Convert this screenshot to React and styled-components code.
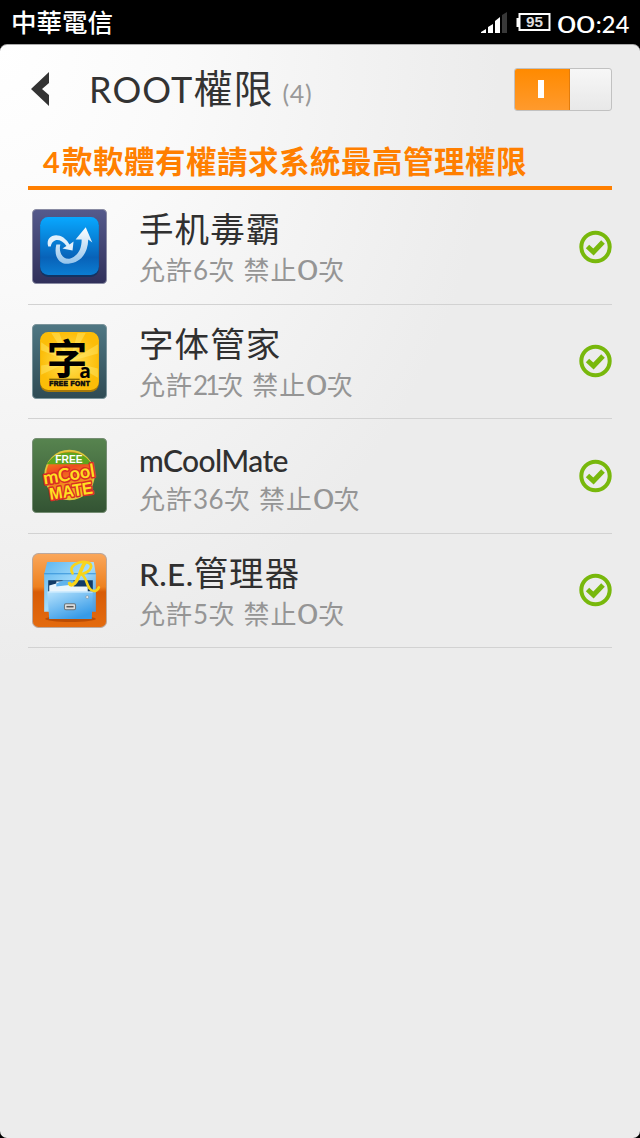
import React from "react";
import styled, { createGlobalStyle } from "styled-components";

const apps = [
	{ id: "duba", name: [["手机毒霸", "cjk"]], allowed: "6", icon: DubaIcon },
	{ id: "font", name: [["字体管家", "cjk"]], allowed: "21", tight: true, icon: FontIcon },
	{ id: "cool", name: [["mCoolMate", "latin"]], allowed: "36", icon: CoolIcon },
	{
		id: "re",
		name: [
			["R.E.", "latin"],
			["管理器", "cjk"],
		],
		allowed: "5",
		icon: ExplorerIcon,
	},
];

function DubaIcon() {
	return (
		<AppIcon viewBox="0 0 74 74">
			<defs>
				<linearGradient id="dubaFrame" x2="0" y2="1">
					<stop offset="0" stopColor="#555a8c" />
					<stop offset="1" stopColor="#30305a" />
				</linearGradient>
				<linearGradient id="dubaFace" x2="0" y2="1">
					<stop offset="0" stopColor="#08a8ff" />
					<stop offset="0.7" stopColor="#0862b8" />
					<stop offset="1" stopColor="#0b7dd2" />
				</linearGradient>
				<linearGradient id="dubaMark" x2="0" y2="1">
					<stop offset="0" stopColor="#fff" />
					<stop offset="1" stopColor="#94c4ec" />
				</linearGradient>
			</defs>
			<rect x=".5" y=".5" width="73" height="73" rx="4" fill="url(#dubaFrame)" stroke="#898ba3" />
			<rect x="8" y="9" width="58" height="58" rx="8" fill="#123363" />
			<rect x="8" y="8" width="58" height="57" rx="8" fill="url(#dubaFace)" />
			<path
				d="M16 37C13 27 23 23 31 28Q35 31 37 35L41 32L40 41L30 39L34 36.5C28 28 20 29 18.5 37Z"
				fill="#e1f0fc"
			/>
			<path
				d="M24 35C21 47 27 55 36 54C47 53 55 45 55.5 30L59.5 33L53 18L43 30L49 30C49 41 44 47 37 49C30 50 26 42 28 35Z"
				fill="url(#dubaMark)"
			/>
		</AppIcon>
	);
}

function FontIcon() {
	return (
		<AppIcon viewBox="0 0 74 74">
			<defs>
				<linearGradient id="fontFrame" x2="0" y2="1">
					<stop offset="0" stopColor="#4f7783" />
					<stop offset="1" stopColor="#2f4b54" />
				</linearGradient>
				<radialGradient id="fontFace">
					<stop offset="0" stopColor="#ffe45b" />
					<stop offset="1" stopColor="#fcbd08" />
				</radialGradient>
			</defs>
			<rect x=".5" y=".5" width="73" height="73" rx="4" fill="url(#fontFrame)" stroke="#7b949b" />
			<rect x="8" y="9" width="58" height="58" rx="8" fill="#a87a08" />
			<rect x="8" y="8" width="58" height="57" rx="8" fill="url(#fontFace)" />
			<path
				d="M37 37L9 18V26ZM37 37L19 9H27ZM37 37L45 9H53ZM37 37L65 20V29ZM37 37L65 44V53ZM37 37L9 41V50Z"
				fill="#fff07c"
				opacity=".4"
			/>
			<IconText x="14.5" y="49" $size={40}>
				字
			</IconText>
			<IconText x="46.5" y="53" $size={19} $family="Open Sans">
				a
			</IconText>
			<rect x="17" y="54" width="30" height="1" fill="#514000" />
			<IconText x="17" y="61.5" $size={6.5} textLength="40" stroke="#111" strokeWidth=".6">
				FREE FONT
			</IconText>
		</AppIcon>
	);
}

function CoolIcon() {
	return (
		<AppIcon viewBox="0 0 74 74">
			<defs>
				<linearGradient id="coolFrame" x2="0" y2="1">
					<stop offset="0" stopColor="#57844f" />
					<stop offset="1" stopColor="#335333" />
				</linearGradient>
				<linearGradient id="coolBall" x2="0.3" y2="1">
					<stop offset="0" stopColor="#f9b514" />
					<stop offset="0.45" stopColor="#ef4b20" />
					<stop offset="1" stopColor="#f4c61c" />
				</linearGradient>
			</defs>
			<rect x=".5" y=".5" width="73" height="73" rx="4" fill="url(#coolFrame)" stroke="#758d73" />
			<circle cx="37" cy="36.5" r="24" fill="url(#coolBall)" stroke="#dfc73d" strokeWidth="1.8" />
			<path d="M14.5 26Q22 14 37 14Q52 14 59 26Z" fill="#5fa51e" />
			<IconText x="23" y="25" $size={11} fill="#fff" textLength="27" lengthAdjust="spacingAndGlyphs">
				FREE
			</IconText>
			<g transform="rotate(-9 37 40)" strokeLinejoin="round">
				<IconText
					x="11.5"
					y="42"
					$size={18}
					$family="Lato"
					fill="#ffdf21"
					stroke="#d92e25"
					strokeWidth="3"
					paintOrder="stroke"
					textLength="51"
					lengthAdjust="spacingAndGlyphs"
				>
					mCool
				</IconText>
				<IconText
					x="15"
					y="58"
					$size={17}
					fill="#ffdf21"
					stroke="#d92e25"
					strokeWidth="3"
					paintOrder="stroke"
					textLength="43"
					lengthAdjust="spacingAndGlyphs"
				>
					MATE
				</IconText>
			</g>
		</AppIcon>
	);
}

function ExplorerIcon() {
	return (
		<AppIcon viewBox="0 0 74 74">
			<defs>
				<linearGradient id="reFrame" x2="0" y2="1">
					<stop offset="0" stopColor="#faa75b" />
					<stop offset="0.45" stopColor="#ee811f" />
					<stop offset="0.52" stopColor="#d85c07" />
					<stop offset="1" stopColor="#e46b0e" />
				</linearGradient>
				<linearGradient id="reBox" x2="1" y2="1">
					<stop offset="0" stopColor="#5eb6ef" />
					<stop offset="0.5" stopColor="#a4dcfb" />
					<stop offset="1" stopColor="#4397dc" />
				</linearGradient>
				<linearGradient id="reDrawer" x2="0.6" y2="1">
					<stop offset="0" stopColor="#b9e4fd" />
					<stop offset="1" stopColor="#379be8" />
				</linearGradient>
			</defs>
			<rect x=".5" y=".5" width="73" height="73" rx="6" fill="url(#reFrame)" stroke="#bca89c" />
			<ellipse cx="38" cy="65" rx="25" ry="3" fill="#a63f00" opacity=".65" />
			<path d="M15 9H61L63 21V58H12V21Z" fill="url(#reBox)" />
			<path d="M12 20.5H63" stroke="#3793d9" />
			<path d="M16 27H60V39H16Z" fill="#123b66" />
			<path d="M17 32L24 30V28H41V33H55V40H17Z" fill="#e9f5fc" />
			<path d="M24 30L31 27H41V31L24 33Z" fill="#61b4ed" />
			<path d="M15 38H60L59 65H17Z" fill="url(#reDrawer)" />
			<path d="M16 38.5H60" stroke="#d7efff" />
			<rect x="32" y="50" width="11" height="6" rx="1.5" fill="#dcdcdc" stroke="#68747b" />
			<path d="M34 53H41" stroke="#575757" strokeWidth="1.5" />
			<circle cx="54.5" cy="43.5" r="1.5" fill="#e2e8eb" stroke="#76909f" strokeWidth=".6" />
			{/* swash initial over the cabinet */}
			<path
				d="M40 20C35 12 47 8 53 9C62 10 59 19 48 21C55 22 53 37 61 37.5Q64 38 66 34"
				fill="none"
				stroke="#f8d51b"
				strokeWidth="2.6"
				strokeLinecap="round"
			/>
			<path
				d="M52 10C48 15 46 27 42 30Q38 33 37 30"
				fill="none"
				stroke="#f8d51b"
				strokeWidth="3.4"
				strokeLinecap="round"
			/>
		</AppIcon>
	);
}

function StatusIcons() {
	return (
		<svg width="70" height="24" viewBox="0 0 70 24">
			<path d="M0 21V20L5 17V21ZM7 21V15L12 12V21ZM14 21V9L19 5V21Z" fill="#fff" />
			<path d="M21 21V3L26 0V21Z" fill="#383838" />
			<rect x="38.5" y="2" width="30" height="16" fill="none" stroke="#fff" strokeWidth="2" />
			<path d="M35.5 6H38.5V15H35.5Z" fill="#fff" />
			<BatteryText x="45" y="15" textLength="17" lengthAdjust="spacingAndGlyphs">
				95
			</BatteryText>
		</svg>
	);
}

function AppRow({ app }) {
	const Icon = app.icon;
	return (
		<Row>
			<Icon />
			<Info>
				<Name>
					{app.name.map(([text, kind]) =>
						kind === "cjk" ? (
							<Cjk key={text} $size={34.5} $gap={1.1}>
								{text}
							</Cjk>
						) : (
							<Latin
								key={text}
								$size={text.length > 4 ? 30 : 31.5}
								$gap={text.length > 4 ? -0.6 : 0.4}
								$drop={text.length > 4 ? 4 : 0}
								$weight={500}
							>
								{text}
							</Latin>
						)
					)}
				</Name>
				<Detail>
					<Cjk $size={26} $gap={1}>允許</Cjk>
					<Latin $size={26} $gap={app.tight ? -3 : 0.4}>{app.allowed}</Latin>
					<Cjk $size={26} $gap={1}>次</Cjk>
					<Space />
					<Cjk $size={26} $gap={1}>禁止</Cjk>
					<Zero>0</Zero>
					<Cjk $size={26}>次</Cjk>
				</Detail>
			</Info>
			<svg width="34" height="34" viewBox="0 0 34 34">
				<circle cx="17.5" cy="17" r="14.2" fill="none" stroke="#78b80c" strokeWidth="4" />
				<path d="M9.5 16.5L15.5 22L25 12" fill="none" stroke="#78b80c" strokeWidth="5" />
			</svg>
		</Row>
	);
}

export default function App() {
	return (
		<Screen>
			<GlobalStyle />
			<StatusBar>
				<Cjk $size={25.5} $weight={500} $drop={-1.5}>中華電信</Cjk>
				<StatusRight>
					<StatusIcons />
					<Clock>
						<Zero>0</Zero>
						<Zero>0</Zero>
						<span>:24</span>
					</Clock>
				</StatusRight>
			</StatusBar>
			<Page>
				<Header>
					<svg width="18" height="34" viewBox="0 0 18 34">
						<path d="M18 0V11L11 17L18 23V34L0 17Z" fill="#333" />
					</svg>
					<Title>
						<Latin $size={36} $gap={1.1}>ROOT</Latin>
						<Cjk $size={39} $gap={1}>權限</Cjk>
						<Count>(4)</Count>
					</Title>
					<Toggle>
						<ToggleOn>
							<Bar />
						</ToggleOn>
					</Toggle>
				</Header>
				<Banner>
					<Latin $size={29} $weight={700}>4</Latin>
					<Cjk $size={30.5} $gap={0.5} $weight={700}>款軟體有權請求系統最高管理權限</Cjk>
				</Banner>
				<List>
					{apps.map((app) => (
						<AppRow key={app.id} app={app} />
					))}
				</List>
			</Page>
		</Screen>
	);
}

const GlobalStyle = createGlobalStyle`
	body {
		margin: 0;
		background: #000;
	}

	* {
		box-sizing: border-box;
	}
`;

const Screen = styled.div`
	width: 640px;
	height: 1138px;
	display: flex;
	flex-direction: column;
	overflow: hidden;
	background: #000;
	font-family: Lato, "Noto Sans CJK TC", sans-serif;
`;

const StatusBar = styled.div`
	height: 44px;
	flex: none;
	display: flex;
	align-items: center;
	justify-content: space-between;
	padding: 0 10px 0 11px;
	color: #fff;
	line-height: 44px;
`;

const StatusRight = styled.div`
	display: flex;
	align-items: center;
	gap: 6px;

	> svg {
		margin-top: 3px;
	}
`;

const Clock = styled.div`
	display: flex;
	width: 73px;
	padding-top: 4px;
	font-size: 23.5px;
	font-weight: 500;
	letter-spacing: 0.2px;
	white-space: nowrap;
`;

const Page = styled.div`
	flex: 1;
	padding: 0 28px;
	border-top: 1px solid #aaa;
	border-radius: 7px;
	background: radial-gradient(ellipse 500px 620px at 0 0, #fff 0%, #fafafa 35%, #ececec 100%);
`;

const Header = styled.div`
	height: 88px;
	display: flex;
	align-items: center;
	padding-left: 3px;
`;

const Title = styled.div`
	flex: 1;
	display: flex;
	align-items: baseline;
	padding-left: 40px;
	line-height: 60px;
	color: #333;
	white-space: nowrap;
`;

const Latin = styled.span`
	position: relative;
	top: ${(props) => props.$drop || 0}px;
	font-family: Lato, sans-serif;
	font-size: ${(props) => props.$size}px;
	font-weight: ${(props) => props.$weight || 400};
	letter-spacing: ${(props) => props.$gap || 0}px;
`;

const Cjk = styled(Latin)`
	font-family: "Noto Sans CJK TC", "Noto Sans CJK SC", sans-serif;
`;

const Count = styled.span`
	padding-left: 9px;
	font-size: 25px;
	letter-spacing: 0.7px;
	color: #999;
`;

/* round zero, wider than the normal figure */
const Zero = styled.span`
	display: inline-block;
	margin: 0 3px 0 2.5px;
	transform: scaleX(1.38);
`;

const Toggle = styled.div`
	width: 98px;
	height: 43px;
	display: flex;
	border: 1px solid #c1c1c1;
	border-radius: 3px;
	overflow: hidden;
	background: linear-gradient(#f7f7f7, #e8e8e8);
`;

const ToggleOn = styled.div`
	width: 55px;
	display: flex;
	align-items: center;
	justify-content: center;
	padding-right: 2px;
	border-right: 1px solid #e27c0c;
	background: linear-gradient(#ff8a00, #ff9a2d);
`;

const Bar = styled.div`
	width: 6px;
	height: 18px;
	background: #fff;
`;

const Banner = styled.div`
	height: 57px;
	display: flex;
	align-items: baseline;
	padding-left: 15px;
	border-bottom: 4px solid #ff7f00;
	color: #ff7f00;
	line-height: 55px;
	white-space: nowrap;

	> :first-child {
		width: 19px;
	}
`;

const List = styled.div`
	display: flex;
	flex-direction: column;
`;

const Row = styled.div`
	height: 114.5px;
	display: flex;
	align-items: center;
	padding-left: 4px;
	border-bottom: 1px solid #d2d2d2;

	> svg {
		flex: none;
	}
`;

const AppIcon = styled.svg.attrs({ width: 75, height: 75 })`
	display: block;
`;

const Info = styled.div`
	flex: 1;
	padding-left: 32px;
`;

const Name = styled.div`
	height: 43px;
	line-height: 43px;
	color: #303030;
	white-space: nowrap;
`;

const Detail = styled.div`
	height: 38px;
	display: flex;
	align-items: baseline;
	line-height: 40px;
	font-size: 26px;
	color: #959595;
	white-space: nowrap;
`;

const Space = styled.span`
	width: 8px;
`;

const IconText = styled.text`
	font-family: "${(props) => props.$family || "Liberation Sans"}", "Noto Sans CJK SC", sans-serif;
	font-size: ${(props) => props.$size}px;
	font-weight: 700;
`;

const BatteryText = styled.text`
	font: 700 14px "Liberation Sans", sans-serif;
	fill: #ddd;
`;
